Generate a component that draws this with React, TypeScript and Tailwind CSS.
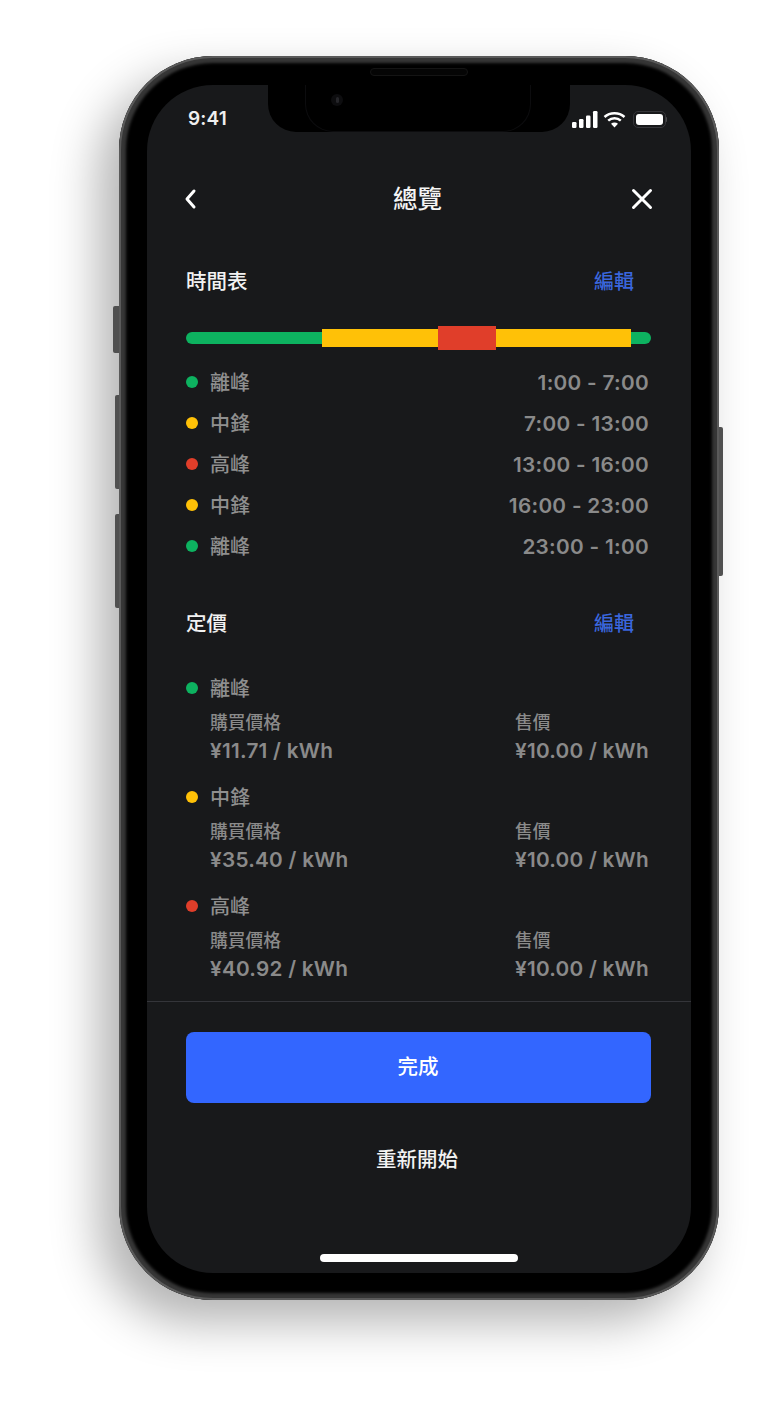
import React from "react";

const GREEN = "bg-[#0db260]";
const YELLOW = "bg-[#ffc107]";
const RED = "bg-[#e03e2a]";

const schedule = [
  { dot: GREEN, name: "離峰", time: "1:00 - 7:00" },
  { dot: YELLOW, name: "中鋒", time: "7:00 - 13:00" },
  { dot: RED, name: "高峰", time: "13:00 - 16:00" },
  { dot: YELLOW, name: "中鋒", time: "16:00 - 23:00" },
  { dot: GREEN, name: "離峰", time: "23:00 - 1:00" },
];

const prices = [
  { dot: GREEN, name: "離峰", buy: "¥11.71 / kWh" },
  { dot: YELLOW, name: "中鋒", buy: "¥35.40 / kWh" },
  { dot: RED, name: "高峰", buy: "¥40.92 / kWh" },
];

function Dot({ c }: { c: string }) {
  return <span className={`w-3 h-3 rounded-full shrink-0 ${c}`} />;
}

function SectionHead({ title }: { title: string }) {
  return (
    <div className="h-[74px] flex items-center justify-between pr-[17px]">
      <span className="text-[20.5px] font-medium text-[#f2f2f2]">{title}</span>
      <span className="text-[20px] font-medium text-[#3a66dc]">編輯</span>
    </div>
  );
}

export default function App() {
  return (
    <div className="w-[773px] h-[1405px] bg-white overflow-hidden pt-[56px] pl-[119px] [font-family:Inter,'Noto_Sans_CJK_TC',sans-serif]">
      <div className="relative w-[600px] h-[1244px] rounded-[94px] bg-black pt-[29px] pb-[27px] pl-[28px] pr-[28px] shadow-[inset_0_0_0_2px_#5a5a5a,inset_0_0_3px_7px_#363636,-20px_22px_48px_rgba(0,0,0,0.3)]">
        {/* side buttons */}
        <span className="absolute left-[-6px] top-[250px] w-[6px] h-[47px] rounded-l-[2px] bg-[#505050]" />
        <span className="absolute left-[-4px] top-[339px] w-[4px] h-[94px] rounded-l-[2px] bg-[#505050]" />
        <span className="absolute left-[-4px] top-[458px] w-[4px] h-[94px] rounded-l-[2px] bg-[#505050]" />
        <span className="absolute right-[-4px] top-[371px] w-[4px] h-[149px] rounded-r-[2px] bg-[#505050]" />

        {/* speaker */}
        <span className="absolute left-[251px] top-[12px] w-[98px] h-[8px] rounded-full bg-[#050505] border border-[#141414]" />

        <div className="relative w-[544px] h-[1188px] rounded-[66px] bg-[#18191b] overflow-hidden">
          {/* notch */}
          <div className="absolute left-[121px] top-0 w-[302px] h-[47px] bg-black rounded-b-[28px]">
            <span className="absolute left-[37px] top-0 w-[226px] h-[47px] rounded-b-[28px] border border-t-0 border-[#0c0c0e]" />
            <span className="absolute left-[63px] top-[9px] w-[12px] h-[12px] rounded-full bg-[#0d0d0f] flex items-center justify-center">
              <span className="w-[3px] h-[6px] rounded-full bg-[#26262a]" />
            </span>
          </div>

          {/* status bar */}
          <div className="h-[68px] flex items-center justify-between pl-[41px] pr-[24px]">
            <span className="text-[19px] font-semibold text-[#efefef] tracking-[0.2px]">9:41</span>
            <div className="flex items-center gap-[5px]">
              <svg width="26" height="17" viewBox="0 0 26 17" fill="#fff">
                <rect x="0" y="11" width="4.5" height="6" rx="1.2" />
                <rect x="7" y="8" width="4.5" height="9" rx="1.2" />
                <rect x="14" y="4.5" width="4.5" height="12.5" rx="1.2" />
                <rect x="21" y="0" width="4.5" height="17" rx="1.2" />
              </svg>
              <svg width="23" height="17" viewBox="0 0 23 17" fill="none" stroke="#fff" strokeWidth="2.5">
                <path d="M1.5 6 C7 1 16 1 21.5 6" />
                <path d="M5.2 9.6 C8.8 6.4 14.2 6.4 17.8 9.6" />
                <path d="M11.5 16.5 L8 12.8 C10 11.2 13 11.2 15 12.8 Z" fill="#fff" stroke="none" />
              </svg>
              <div className="flex items-center ml-[2px]">
                <div className="w-[33px] h-[17px] rounded-[5px] border border-[#36363a] p-[2px]">
                  <div className="w-full h-full rounded-[3px] bg-white" />
                </div>
                <span className="w-[1.5px] h-[5px] rounded-r-sm bg-[#4a4a4c]" />
              </div>
            </div>
          </div>

          {/* nav */}
          <div className="h-[92px] flex items-center justify-between pl-[37px] pr-[38px]">
            <svg width="14" height="22" viewBox="0 0 14 22" fill="none" stroke="#fff" strokeWidth="3" strokeLinecap="round" strokeLinejoin="round">
              <path d="M10 3 L3 11 L10 19" />
            </svg>
            <span className="text-[24.5px] font-medium text-[#f4f4f4] pl-[6px]">總覽</span>
            <svg width="22" height="22" viewBox="0 0 22 22" fill="none" stroke="#fff" strokeWidth="3" strokeLinecap="round">
              <path d="M2.5 2.5 L19.5 19.5 M19.5 2.5 L2.5 19.5" />
            </svg>
          </div>

          <div className="pl-[39px] pr-[40px]">
            <SectionHead title="時間表" />

            {/* timeline */}
            <div className="h-[36px] pt-[1px] flex items-center">
              <div className={`w-[465px] h-[12px] rounded-full ${GREEN} flex items-center`}>
                <div className={`ml-[136px] w-[309px] h-[18px] ${YELLOW} flex items-center pl-[116px]`}>
                  <span className={`w-[58px] h-[24px] ${RED}`} />
                </div>
              </div>
            </div>

            <div className="mt-[6px]">
              {schedule.map((s, i) => (
                <div key={i} className="h-[41px] flex items-center pr-[2px]">
                  <Dot c={s.dot} />
                  <span className="ml-3 pt-[2px] text-[20px] text-[#8f8f8f] font-medium">{s.name}</span>
                  <span className="ml-auto pt-[2px] text-[20.75px] font-semibold text-[#8a8a8a] tracking-[0.3px]">{s.time}</span>
                </div>
              ))}
            </div>

            <div className="mt-[21px]">
              <SectionHead title="定價" />
            </div>

            <div className="mt-[11px]">
              {prices.map((p, i) => (
                <div key={i} className="h-[109px]">
                  <div className="h-[32px] flex items-center">
                    <Dot c={p.dot} />
                    <span className="ml-3 pt-[2px] text-[20px] text-[#8f8f8f] font-medium">{p.name}</span>
                  </div>
                  <div className="mt-[5px] pl-6 pr-[2px] flex justify-between">
                    <div>
                      <div className="h-[28px] leading-[28px] text-[17.75px] font-medium text-[#8a8a8a]">購買價格</div>
                      <div className="h-[28px] leading-[28px] text-[20.75px] font-semibold text-[#8a8a8a] tracking-[0.25px]">{p.buy}</div>
                    </div>
                    <div>
                      <div className="h-[28px] leading-[28px] text-[17.75px] font-medium text-[#8a8a8a]">售價</div>
                      <div className="h-[28px] leading-[28px] text-[20.75px] font-semibold text-[#8a8a8a] tracking-[0.25px]">¥10.00 / kWh</div>
                    </div>
                  </div>
                </div>
              ))}
            </div>
          </div>

          {/* footer */}
          <div className="mt-[2px] border-t border-[#34353a] pl-[39px] pr-[40px] pt-[30px]">
            <div className="h-[71px] rounded-[8px] bg-[#3366ff] flex items-center justify-center pr-[1px] text-[20.5px] font-medium text-white">完成</div>
            <div className="mt-[25px] h-[64px] flex items-center justify-center pr-[3px] text-[20.5px] font-medium text-[#f2f2f2]">重新開始</div>
          </div>

          {/* home indicator */}
          <div className="absolute left-[173px] bottom-[11px] w-[198px] h-[8px] rounded-full bg-white" />
        </div>
      </div>
    </div>
  );
}
